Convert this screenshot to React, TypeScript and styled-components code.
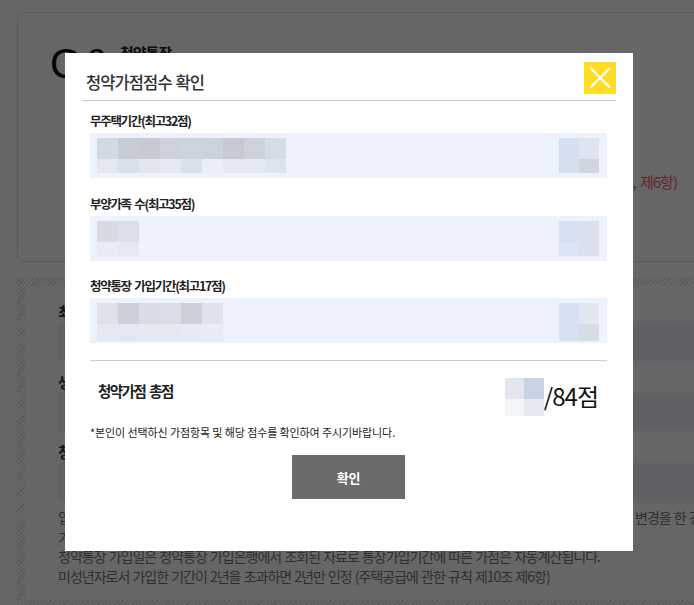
import React from 'react';
import styled, { createGlobalStyle } from 'styled-components';

const Global = createGlobalStyle`
  html, body { margin: 0; padding: 0; overflow: hidden; background: #fff; }
  body { font-family: "Noto Sans CJK KR", "Noto Sans", sans-serif; }
  * { box-sizing: border-box; }
`;

/* ---------- background page ---------- */
const Page = styled.div`
  width: 740px;
  padding: 12px 0 0 17px;
`;

const Card = styled.section`
  height: 250px;
  border: 1px solid #ddd;
  border-radius: 8px;
  display: flex;
  padding: 30px 62px 0 32px;
`;

const QMark = styled.div`
  width: 70px;
  flex: none;
  font-family: "Liberation Sans", Arial, sans-serif;
  font-size: 42px;
  line-height: 1;
  color: #111;
  white-space: nowrap;
  overflow: hidden;
`;

const CardBody = styled.div`
  flex: 1;
  display: flex;
  flex-direction: column;
  min-width: 0;
`;

const CardTitle = styled.h2`
  margin: 0;
  font-size: 15px;
  line-height: 20px;
  font-weight: 700;
  letter-spacing: -1px;
  color: #222;
`;

const CardNote = styled.p`
  margin: 109px 0 0;
  font-size: 15px;
  line-height: 20px;
  letter-spacing: -1px;
  word-spacing: 2px;
  color: #f56262;
  text-align: right;
  white-space: nowrap;
`;

const Hatch = styled.section`
  margin-top: 16px;
  padding: 8px;
  background: repeating-linear-gradient(-45deg, #e2e2e2 0 1px, #fff 1px 3px);
`;

const HatchInner = styled.div`
  background: #fff;
  padding: 16px 0 14px 33px;
`;

const Field = styled.div`
  & + & { margin-top: 11px; }
`;

const FieldLabel = styled.div`
  font-size: 15px;
  line-height: 20px;
  font-weight: 700;
  color: #333;
  letter-spacing: -1px;
`;

const FieldBar = styled.div`
  margin-top: 1px;
  height: 38px;
  background: #edf2fd;
`;

const InfoList = styled.div`
  margin-top: 7px;
`;

const InfoLine = styled.div`
  display: flex;
  font-size: 14px;
  line-height: 19.5px;
  letter-spacing: -1px;
  word-spacing: 1px;
  color: #777;
  white-space: pre;
`;

const InfoHead = styled.span`
  width: 577px;
  flex: none;
  overflow: hidden;
`;

/* ---------- modal ---------- */
const Overlay = styled.div`
  position: fixed;
  inset: 0;
  background: rgba(0, 0, 0, 0.6);
  display: flex;
  align-items: flex-start;
  justify-content: flex-start;
  padding: 53px 0 0 65px;
`;

const Dialog = styled.div`
  width: 568px;
  height: 498px;
  background: #fff;
  display: flex;
  flex-direction: column;
`;

const Header = styled.header`
  display: flex;
  justify-content: space-between;
  align-items: flex-end;
  margin: 0 17px;
  padding: 9px 0 6px 4px;
  border-bottom: 1px solid #c9c9c9;
`;

const Title = styled.h1`
  margin: 0 0 2px;
  font-size: 16.5px;
  line-height: 20px;
  font-weight: 500;
  letter-spacing: -0.9px;
  word-spacing: 1px;
  color: #333;
`;

const CloseButton = styled.button`
  width: 32px;
  height: 32px;
  padding: 0;
  border: none;
  background: #ffdd22;
  display: flex;
  align-items: center;
  justify-content: center;
  cursor: pointer;
`;

const Body = styled.div`
  padding: 11px 26px 0 25px;
  display: flex;
  flex-direction: column;
`;

const Group = styled.div`
  & + & { margin-top: 16.5px; }
`;

const GroupLabel = styled.div`
  font-size: 12.5px;
  line-height: 18px;
  font-weight: 700;
  letter-spacing: -1.3px;
  word-spacing: 2px;
  color: #222;
  margin-bottom: 3px;
`;

const ScoreBox = styled.div`
  height: 45px;
  background: #edf2fd;
  display: flex;
  justify-content: space-between;
  align-items: flex-start;
  padding: 5px 8px 0 7px;
`;

const MosaicGrid = styled.div<{ $cols: number; $w: number; $rows: string }>`
  display: grid;
  grid-auto-flow: column;
  grid-template-columns: repeat(${(p) => p.$cols}, ${(p) => p.$w}px);
  grid-template-rows: ${(p) => p.$rows};
  flex: none;
`;

const Tile = styled.div<{ $c: string }>`
  background: ${(p) => p.$c};
`;

const Divider = styled.hr`
  margin: 17px 0 0;
  border: none;
  border-top: 1px solid #cccccc;
  height: 0;
`;

const TotalRow = styled.div`
  margin-top: 17px;
  height: 38px;
  padding: 0 9px 0 8px;
  display: flex;
  justify-content: space-between;
  align-items: flex-start;
`;

const TotalLabel = styled.div`
  margin-top: 2.5px;
  font-size: 14.5px;
  line-height: 20px;
  font-weight: 700;
  letter-spacing: -1.5px;
  word-spacing: 2px;
  color: #222;
`;

const TotalValue = styled.div`
  display: flex;
  align-items: center;
`;

const TotalMax = styled.span`
  font-size: 24px;
  line-height: 38px;
  letter-spacing: -1px;
  color: #111;
  margin-top: -3px;
`;

const Notice = styled.p`
  margin: 8px 0 0;
  font-size: 11px;
  line-height: 16px;
  letter-spacing: -0.1px;
  color: #222;
`;

const ConfirmButton = styled.button`
  margin: 15px auto 0;
  width: 113px;
  height: 44px;
  border: none;
  background: #6b6b6b;
  color: #fff;
  font-family: inherit;
  font-size: 13px;
  font-weight: 700;
  letter-spacing: -0.3px;
  cursor: pointer;
`;

type Col = [string, string];

function Mosaic({ cols, w, rows }: { cols: Col[]; w: number; rows: string }) {
  return (
    <MosaicGrid $cols={cols.length} $w={w} $rows={rows}>
      {cols.flatMap((c, i) => [<Tile key={i + 'a'} $c={c[0]} />, <Tile key={i + 'b'} $c={c[1]} />])}
    </MosaicGrid>
  );
}

const groups: { label: string; left: Col[]; right: Col[]; rows: string }[] = [
  {
    label: '무주택기간(최고32점)',
    rows: '21px 14px',
    left: [
      ['#d3d9e3', '#e2e7f0'],
      ['#c8ccd5', '#dbe1ec'],
      ['#c6cad3', '#e1e6ee'],
      ['#ccd1dc', '#e3e8f2'],
      ['#cdd4dc', '#dbe1ea'],
      ['#ccd2dc', '#e9eef9'],
      ['#c5cad4', '#e3e8f2'],
      ['#ccd1da', '#e3e8f2'],
      ['#d5dbe7', '#dde3ef'],
    ],
    right: [
      ['#d4dff0', '#d4dff0'],
      ['#dfe5f0', '#cfd6e2'],
    ],
  },
  {
    label: '부양가족 수(최고35점)',
    rows: '21px 14px',
    left: [
      ['#d7dae3', '#e8ecf6'],
      ['#dadfe9', '#e5e9f4'],
    ],
    right: [
      ['#d6e0f1', '#dce5f5'],
      ['#dbe1ec', '#dbe1ec'],
    ],
  },
  {
    label: '청약통장 가입기간(최고17점)',
    rows: '21px 17px',
    left: [
      ['#dde1ea', '#e4e8f1'],
      ['#ccd0d9', '#e3e7f1'],
      ['#d8dce6', '#e4e8f1'],
      ['#d9dde7', '#e4e8f1'],
      ['#cdd0d9', '#e6eaf4'],
      ['#dee2ec', '#e8ecf5'],
    ],
    right: [
      ['#d7e1f3', '#d7e1f3'],
      ['#e1e6f0', '#d6dde7'],
    ],
  },
];

export default function App() {
  return (
    <>
      <Global />
      <Page>
        <Card>
          <QMark>Q&amp;A</QMark>
          <CardBody>
            <CardTitle>청약통장</CardTitle>
            <CardNote>미성년자로서 가입한 기간이 2년을 초과하면 2년만 인정 (주택공급에 관한 규칙 제10조, 제6항)</CardNote>
          </CardBody>
        </Card>
        <Hatch>
          <HatchInner>
            <Field>
              <FieldLabel>최초 가입일</FieldLabel>
              <FieldBar />
            </Field>
            <Field>
              <FieldLabel>생년월일</FieldLabel>
              <FieldBar />
            </Field>
            <Field>
              <FieldLabel>청약통장 가입기간</FieldLabel>
              <FieldBar />
            </Field>
            <InfoList>
              <InfoLine>
                <InfoHead>입주자모집공고일 현재 청약통장 가입기간을 기준으로 하며, 청약통장 전환, 예치금액 및 명의</InfoHead>
                <span>변경을 한 경우에도 최초 가입일을 기준으로 합니다.</span>
              </InfoLine>
              <InfoLine>가입기간은 최초 가입일로부터 입주자모집공고일까지로 산정합니다.</InfoLine>
              <InfoLine>청약통장 가입일은 청약통장 가입은행에서 조회된 자료로 통장가입기간에 따른 가점은 자동계산됩니다.</InfoLine>
              <InfoLine>미성년자로서 가입한 기간이 2년을 초과하면 2년만 인정 (주택공급에 관한 규칙 제10조 제6항)</InfoLine>
            </InfoList>
          </HatchInner>
        </Hatch>
      </Page>

      <Overlay>
        <Dialog role="dialog" aria-label="청약가점점수 확인">
          <Header>
            <Title>청약가점점수 확인</Title>
            <CloseButton aria-label="닫기">
              <svg width="32" height="32" viewBox="0 0 32 32">
                <path d="M7 6.5 L25.5 25 M25.5 6.5 L7 25" stroke="#fff" strokeWidth="2.2" strokeLinecap="round" fill="none" />
              </svg>
            </CloseButton>
          </Header>
          <Body>
            {groups.map((g) => (
              <Group key={g.label}>
                <GroupLabel>{g.label}</GroupLabel>
                <ScoreBox>
                  <Mosaic cols={g.left} w={21} rows={g.rows} />
                  <Mosaic cols={g.right} w={20} rows={g.rows} />
                </ScoreBox>
              </Group>
            ))}
            <Divider />
            <TotalRow>
              <TotalLabel>청약가점 총점</TotalLabel>
              <TotalValue>
                <Mosaic
                  cols={[
                    ['#e3e6ee', '#f3f5f9'],
                    ['#c8d3e6', '#e3e8f1'],
                  ]}
                  w={19.5}
                  rows="21px 17px"
                />
                <TotalMax>/84점</TotalMax>
              </TotalValue>
            </TotalRow>
            <Notice>*본인이 선택하신 가점항목 및 해당 점수를 확인하여 주시기바랍니다.</Notice>
            <ConfirmButton>확인</ConfirmButton>
          </Body>
        </Dialog>
      </Overlay>
    </>
  );
}
